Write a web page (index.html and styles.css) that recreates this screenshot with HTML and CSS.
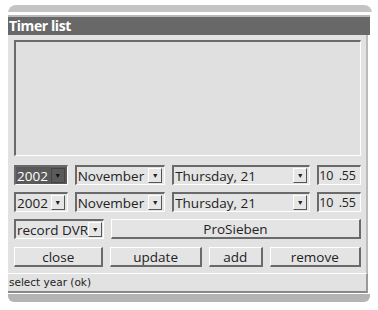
FILE: index.html
```html
<!DOCTYPE html>
<html lang="en">
<head>
  <meta charset="UTF-8">
  <title>Timer list</title>
  <link rel="stylesheet" href="styles.css">
</head>
<body>
  <div class="window">
    <div class="topbar"></div>
    <div class="title">Timer list</div>
    <div class="body">
      <div class="list"></div>

      <div class="row">
        <div class="field year focus"><span class="val">2002</span><span class="arrow">&#9660;</span></div>
        <div class="field month"><span class="val">November</span><span class="arrow">&#9660;</span></div>
        <div class="field day"><span class="val">Thursday, 21</span><span class="arrow">&#9660;</span></div>
        <div class="field time"><span class="val">10 &nbsp;.55</span></div>
      </div>
      <div class="row">
        <div class="field year"><span class="val">2002</span><span class="arrow">&#9660;</span></div>
        <div class="field month"><span class="val">November</span><span class="arrow">&#9660;</span></div>
        <div class="field day"><span class="val">Thursday, 21</span><span class="arrow">&#9660;</span></div>
        <div class="field time"><span class="val">10 &nbsp;.55</span></div>
      </div>
      <div class="row">
        <div class="field mode"><span class="val">record DVR</span><span class="arrow">&#9660;</span></div>
        <button class="btn channel">ProSieben</button>
      </div>
      <div class="row">
        <button class="btn close">close</button>
        <button class="btn update">update</button>
        <button class="btn add">add</button>
        <button class="btn remove">remove</button>
      </div>
    </div>
    <div class="status">select year (ok)</div>
    <div class="bottombar"></div>
  </div>
</body>
</html>
```

FILE: styles.css
```css
body {
  margin: 0;
  background: #fff;
  font-family: "Open Sans", sans-serif;
}
.window {
  width: 362px;
  margin: 5px 0 0 8px;
}
.topbar {
  height: 7px;
  background: #c4c4c4;
  border-radius: 8px 8px 0 0;
  border-bottom: 2px solid #fff;
  margin-right: -2px;
}
.title {
  height: 18px;
  margin-top: 1px;
  border-top: 2px solid #b8b8b8;
  background: #686868;
  color: #fff;
  font-weight: bold;
  font-size: 14px;
  letter-spacing: -0.4px;
  line-height: 18px;
  padding-left: 1px;
}
.body {
  background: #e2e2e2;
  padding: 5px 5px 6px 6px;
  margin-right: 2px;
  border-right: 2px solid #bbb;
  display: flex;
  flex-direction: column;
  gap: 7px;
}
.list {
  height: 113px;
  border-top: 2px solid #6a6a6a;
  border-left: 2px solid #6a6a6a;
  border-right: 1px solid #fff;
  border-bottom: 1px solid #fff;
  background: #e0e0e0;
  margin-bottom: 2px;
}
.row {
  display: flex;
  gap: 7px;
  height: 20px;
}
.row:last-child {
  margin-top: 1px;
}
.field {
  display: flex;
  align-items: center;
  justify-content: space-between;
  box-sizing: border-box;
  border-top: 2px solid #6a6a6a;
  border-left: 2px solid #6a6a6a;
  border-right: 1px solid #fff;
  border-bottom: 1px solid #fff;
  background: #e4e4e4;
  font-size: 13.5px;
  color: #222;
  padding: 0 2px 0 1px;
  white-space: nowrap;
  overflow: hidden;
}
.arrow {
  width: 12px;
  height: 13px;
  flex: none;
  font-size: 7px;
  line-height: 13px;
  text-align: center;
  background: #e6e6e6;
  border-top: 1px solid #fff;
  border-left: 1px solid #fff;
  border-right: 1px solid #555;
  border-bottom: 1px solid #555;
  color: #222;
}
.focus {
  background: #5a5a5a;
  color: #fff;
}
.focus .arrow {
  background: #5a5a5a;
  color: #111;
  border-color: #444;
}
.year { width: 54px; }
.month { width: 91px; }
.day { width: 139px; }
.time {
  width: 44px;
  font-size: 12.5px;
  letter-spacing: -0.3px;
  padding: 0;
}
.mode { width: 90px; }
.btn {
  box-sizing: border-box;
  height: 20px;
  font-family: "Open Sans", sans-serif;
  font-size: 13.5px;
  line-height: 16px;
  color: #222;
  background: #e4e4e4;
  border-top: 1px solid #fff;
  border-left: 1px solid #fff;
  border-right: 2px solid #6a6a6a;
  border-bottom: 2px solid #6a6a6a;
  padding: 0;
}
.channel { flex: 1; }
.close { width: 90px; }
.update { width: 92px; }
.add { width: 54px; }
.remove { width: 92px; }
.status {
  height: 17px;
  background: #e2e2e2;
  border-top: 1px solid #fff;
  border-bottom: 2px solid #888;
  border-right: 2px solid #999;
  margin-right: 2px;
  font-family: "DejaVu Sans", sans-serif;
  font-size: 10.5px;
  line-height: 17px;
  padding-left: 1px;
  color: #222;
}
.bottombar {
  height: 8px;
  background: #b4b4b4;
  border-radius: 0 0 6px 6px;
  margin-top: 1px;
}
```
